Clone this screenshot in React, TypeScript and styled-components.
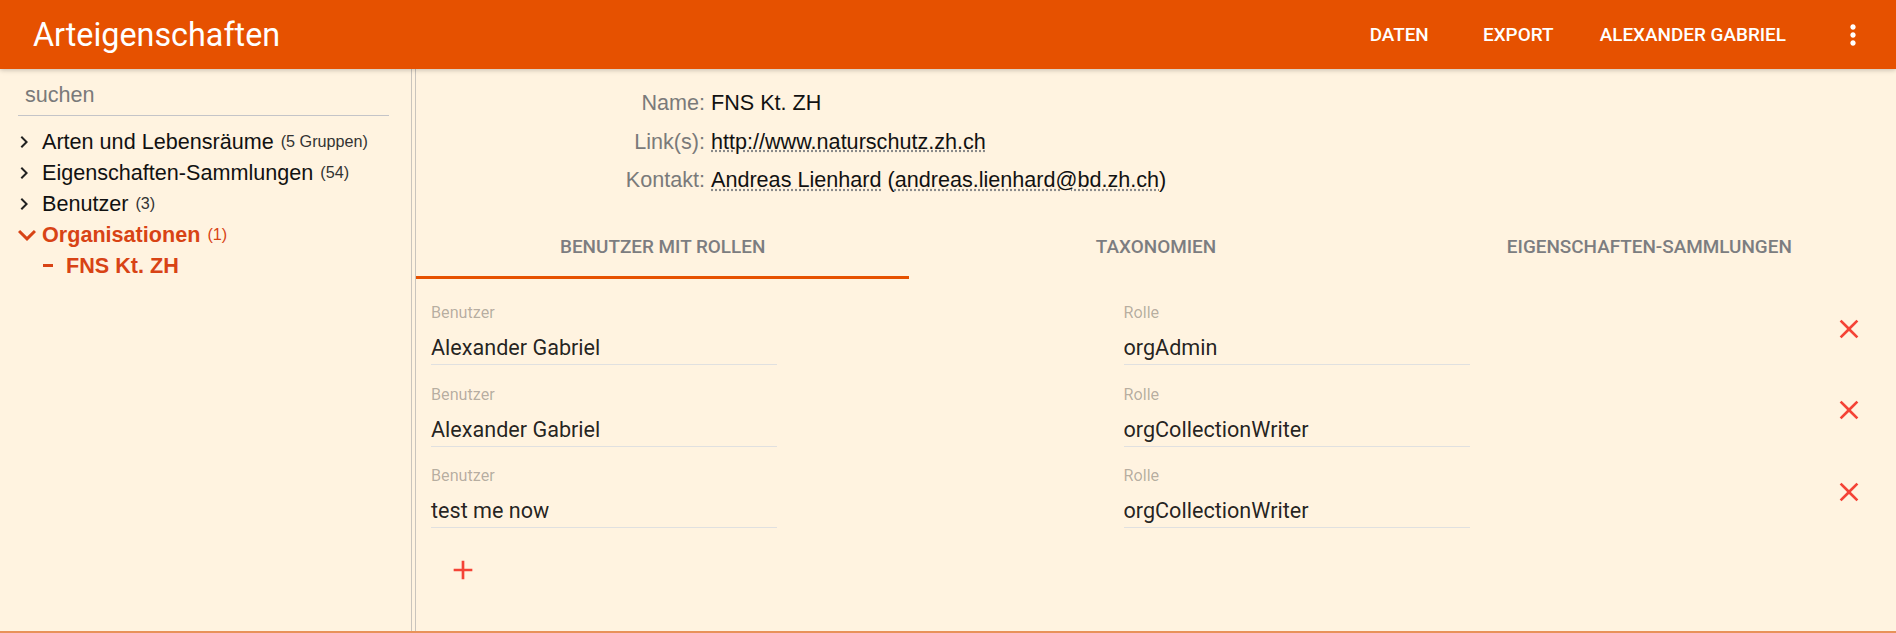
import styled, { createGlobalStyle } from "styled-components";

interface ITreeNode {
  label: string;
  count?: string;
  open?: boolean;
  active?: boolean;
  depth: number;
}

interface IUserRole {
  user: string;
  role: string;
}

const GlobalStyle = createGlobalStyle`
  html, body {
    margin: 0;
    padding: 0;
    background: #fff3e0;
  }
  body {
    font-family: Roboto, "Liberation Sans", sans-serif;
  }
  * {
    box-sizing: border-box;
  }
`;

const Page = styled.div`
  height: 633px;
  display: flex;
  flex-direction: column;
  background: #fff3e0;
  overflow: hidden;
`;

const AppBar = styled.header`
  position: relative;
  z-index: 1;
  height: 69px;
  flex-shrink: 0;
  display: flex;
  align-items: center;
  padding: 0 11px 0 33px;
  background: #e65100;
  color: #fff;
  box-shadow: 0 1px 6px rgba(0, 0, 0, 0.12), 0 1px 4px rgba(0, 0, 0, 0.12);
`;

const Title = styled.h1`
  flex: 1;
  margin: 0;
  font: 400 32.3px Roboto, sans-serif;
`;

const NavButton = styled.button`
  min-width: 119px;
  height: 49px;
  padding: 0 22px;
  border: 0;
  background: transparent;
  color: #fff;
  font: 500 18.9px Roboto, sans-serif;
  text-transform: uppercase;
  cursor: pointer;
`;

const IconButton = styled.button`
  width: 65px;
  height: 65px;
  flex-shrink: 0;
  display: flex;
  align-items: center;
  justify-content: center;
  padding: 0;
  border: 0;
  background: transparent;
  cursor: pointer;
`;

const MenuButton = styled(IconButton)`
  margin-left: 12px;
`;

const Body = styled.div`
  height: 564px;
  flex-shrink: 0;
  display: flex;
  border-bottom: 2px solid #e8925a;
`;

const Sidebar = styled.nav`
  width: 411px;
  flex-shrink: 0;
  padding-top: 6px;
`;

const Search = styled.input`
  display: block;
  width: 371px;
  height: 41px;
  margin-left: 18px;
  padding: 0 0 0 7px;
  border: 0;
  border-bottom: 1px solid #c4c4c8;
  background: transparent;
  font: 400 21.6px "Liberation Sans", Arial, sans-serif;
  color: #222;
  outline: none;

  &::placeholder {
    color: #7a7a7a;
  }
`;

const Tree = styled.div`
  margin-top: 10px;
`;

const TreeRow = styled.div<{ $depth: number; $active: boolean }>`
  height: 31px;
  display: flex;
  align-items: center;
  padding-left: ${(props): number => 12 + props.$depth * 30}px;
  font: ${(props): string => (props.$active ? "700" : "400")} 21.6px "Liberation Sans", Arial, sans-serif;
  color: ${(props): string => (props.$active ? "#d84315" : "#111")};
  white-space: nowrap;
`;

const Toggle = styled.span`
  width: 30px;
  height: 31px;
  flex-shrink: 0;
  display: flex;
  align-items: center;
  overflow: visible;
`;

const LeafBox = styled.span`
  width: 24px;
  flex-shrink: 0;
  display: flex;
  align-items: center;
`;

const Dash = styled.span`
  width: 10px;
  height: 3px;
  margin-left: 1px;
  background: #d84315;
`;

const Count = styled.span<{ $active: boolean }>`
  margin-left: 7px;
  font-size: 16.2px;
  font-weight: 400;
  color: ${(props): string => (props.$active ? "#d84315" : "#333")};
`;

const Resizer = styled.div`
  width: 5px;
  flex-shrink: 0;
  border-left: 1px solid #c9c4bd;
  border-right: 1px solid #c9c4bd;
`;

const Content = styled.main`
  flex: 1;
  min-width: 0;
  display: flex;
  flex-direction: column;
`;

const InfoTable = styled.div`
  display: grid;
  grid-template-columns: 289px 1fr;
  column-gap: 6px;
  grid-auto-rows: 38.5px;
  align-items: center;
  padding: 15px 0 14.5px;
  font: 400 21.6px "Liberation Sans", Arial, sans-serif;
`;

const InfoLabel = styled.span`
  text-align: right;
  color: #7a7a7a;
`;

const InfoValue = styled.span`
  color: #111;
  white-space: nowrap;
`;

const Dotted = styled.span`
  text-decoration-line: underline;
  text-decoration-style: dotted;
  text-decoration-color: #8a8a8a;
  text-underline-offset: 2px;
`;

const TabBar = styled.div`
  display: grid;
  grid-template-columns: repeat(3, 1fr);
  height: 65px;
`;

const Tab = styled.button<{ $active: boolean }>`
  padding: 3px 0 0;
  border: 0;
  border-bottom: 3px solid ${(props): string => (props.$active ? "#e65100" : "transparent")};
  background: transparent;
  color: #7c7d80;
  font: 500 18.9px Roboto, sans-serif;
  text-transform: uppercase;
  cursor: pointer;
`;

const Rows = styled.div`
  padding-top: 5px;
`;

const UserRow = styled.div`
  display: grid;
  grid-template-columns: 1fr 1fr 65px;
  height: 81.5px;
  padding: 0 15px;
`;

const Field = styled.div`
  width: 50%;
  padding-top: 19px;
`;

const FieldLabel = styled.div`
  height: 20px;
  line-height: 20px;
  font: 400 16.2px Roboto, sans-serif;
  color: rgba(0, 0, 0, 0.3);
`;

const FieldValue = styled.div`
  margin-top: 10px;
  height: 32px;
  padding-top: 2px;
  line-height: 28px;
  border-bottom: 1px solid #e0e0e0;
  font: 400 21.6px Roboto, sans-serif;
  color: rgba(0, 0, 0, 0.87);
`;

const DeleteButton = styled(IconButton)`
  margin-top: 12px;
`;

const AddButton = styled(IconButton)`
  margin: 9px 0 0 14px;
`;

const treeNodes: ITreeNode[] = [
  { label: "Arten und Lebensräume", count: "(5 Gruppen)", depth: 0 },
  { label: "Eigenschaften-Sammlungen", count: "(54)", depth: 0 },
  { label: "Benutzer", count: "(3)", depth: 0 },
  { label: "Organisationen", count: "(1)", open: true, active: true, depth: 0 },
  { label: "FNS Kt. ZH", active: true, depth: 1 },
];

const userRoles: IUserRole[] = [
  { user: "Alexander Gabriel", role: "orgAdmin" },
  { user: "Alexander Gabriel", role: "orgCollectionWriter" },
  { user: "test me now", role: "orgCollectionWriter" },
];

const tabs = ["Benutzer mit Rollen", "Taxonomien", "Eigenschaften-Sammlungen"];

const ChevronRight = (): JSX.Element => (
  <svg width="24" height="24" viewBox="0 0 24 24">
    <path d="M8.59 16.59L13.17 12 8.59 7.41 10 6l6 6-6 6-1.41-1.41z" fill="#222" />
  </svg>
);

const ChevronDown = (): JSX.Element => (
  <svg width="36" height="36" viewBox="0 0 24 24" style={{ marginLeft: -3, flexShrink: 0 }}>
    <path d="M16.59 8.59L12 13.17 7.41 8.59 6 10l6 6 6-6z" fill="#d84315" />
  </svg>
);

const App = (): JSX.Element => {
  return (
    <Page>
      <GlobalStyle />
      <AppBar>
        <Title>Arteigenschaften</Title>
        <NavButton type="button">Daten</NavButton>
        <NavButton type="button">Export</NavButton>
        <NavButton type="button">Alexander Gabriel</NavButton>
        <MenuButton type="button" aria-label="Menü">
          <svg width="32" height="32" viewBox="0 0 24 24">
            <path
              d="M12 8c1.1 0 2-.9 2-2s-.9-2-2-2-2 .9-2 2 .9 2 2 2zm0 2c-1.1 0-2 .9-2 2s.9 2 2 2 2-.9 2-2-.9-2-2-2zm0 6c-1.1 0-2 .9-2 2s.9 2 2 2 2-.9 2-2-.9-2-2-2z"
              fill="#fff"
            />
          </svg>
        </MenuButton>
      </AppBar>

      <Body>
        <Sidebar>
          <Search placeholder="suchen" />
          <Tree>
            {treeNodes.map((node) => (
              <TreeRow key={node.label} $depth={node.depth} $active={!!node.active}>
                {node.depth === 0 ? (
                  <Toggle>{node.open ? <ChevronDown /> : <ChevronRight />}</Toggle>
                ) : (
                  <LeafBox>
                    <Dash />
                  </LeafBox>
                )}
                {node.label}
                {node.count && <Count $active={!!node.active}>{node.count}</Count>}
              </TreeRow>
            ))}
          </Tree>
        </Sidebar>

        <Resizer />

        <Content>
          <InfoTable>
            <InfoLabel>Name:</InfoLabel>
            <InfoValue>FNS Kt. ZH</InfoValue>
            <InfoLabel>Link(s):</InfoLabel>
            <InfoValue>
              <Dotted>http://www.naturschutz.zh.ch</Dotted>
            </InfoValue>
            <InfoLabel>Kontakt:</InfoLabel>
            <InfoValue>
              <Dotted>Andreas Lienhard</Dotted> (<Dotted>andreas.lienhard@bd.zh.ch</Dotted>)
            </InfoValue>
          </InfoTable>

          <TabBar>
            {tabs.map((tab, index) => (
              <Tab type="button" key={tab} $active={index === 0}>
                {tab}
              </Tab>
            ))}
          </TabBar>

          <Rows>
            {userRoles.map((entry, index) => (
              <UserRow key={`${entry.user}-${index}`}>
                <Field>
                  <FieldLabel>Benutzer</FieldLabel>
                  <FieldValue>{entry.user}</FieldValue>
                </Field>
                <Field>
                  <FieldLabel>Rolle</FieldLabel>
                  <FieldValue>{entry.role}</FieldValue>
                </Field>
                <DeleteButton type="button" aria-label="löschen">
                  <svg width="32" height="32" viewBox="0 0 24 24">
                    <path
                      d="M19 6.41L17.59 5 12 10.59 6.41 5 5 6.41 10.59 12 5 17.59 6.41 19 12 13.41 17.59 19 19 17.59 13.41 12z"
                      fill="#f44336"
                    />
                  </svg>
                </DeleteButton>
              </UserRow>
            ))}
            <AddButton type="button" aria-label="neu">
              <svg width="32" height="32" viewBox="0 0 24 24">
                <path d="M19 13h-6v6h-2v-6H5v-2h6V5h2v6h6v2z" fill="#f44336" />
              </svg>
            </AddButton>
          </Rows>
        </Content>
      </Body>
    </Page>
  );
};

export default App;
